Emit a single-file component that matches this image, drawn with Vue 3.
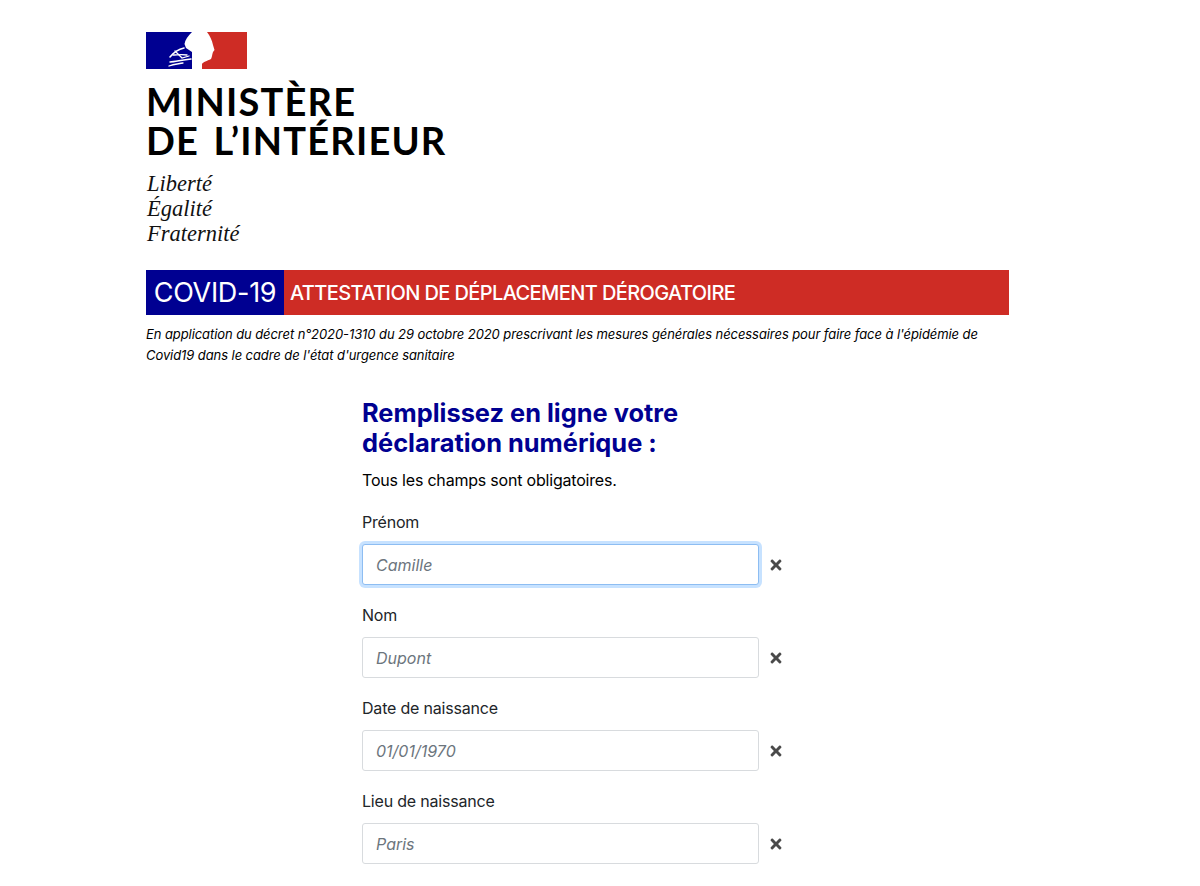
<script setup>
const fields = [
  { label: 'Prénom', placeholder: 'Camille', focus: true },
  { label: 'Nom', placeholder: 'Dupont' },
  { label: 'Date de naissance', placeholder: '01/01/1970' },
  { label: 'Lieu de naissance', placeholder: 'Paris' },
]
</script>

<template>
  <div class="page">
    <header class="logo">
      <svg class="flag" viewBox="0 0 101 37" width="101" height="37" aria-hidden="true">
        <rect width="101" height="37" fill="#fff" />
        <path d="M0 0H46C42 4 39 8 38.500 12L40 16 46 20V37H0Z" fill="#000091" />
        <path d="M61 0H101V37H56V32C57 30 61 29 65 27 66 25 66 23 67 20L68.500 18 67 13C66 8 64 4 61 0Z" fill="#ce2c25" />
        <g fill="none" stroke="#fff" stroke-linecap="round">
          <path d="M24 25C28 20 33 17 38 16" stroke-width="1.600" />
          <path d="M27 23C31 23 35 22 41 23" stroke-width="1.300" />
          <path d="M29 19L36 26 43 24" stroke-width="1.300" />
          <path d="M24 30C29 30 35 28 45 27" stroke-width="1.500" />
          <path d="M23 34C28 32 32 32 37 31" stroke-width="1.300" />
        </g>
      </svg>
      <div class="ministry">MINISTÈRE<br />DE L’INTÉRIEUR</div>
      <div class="motto">Liberté<br />Égalité<br />Fraternité</div>
    </header>

    <div class="banner">
      <div class="banner-covid">COVID-19</div>
      <div class="banner-title">ATTESTATION DE DÉPLACEMENT DÉROGATOIRE</div>
    </div>
    <p class="decree">
      En application du décret n°2020-1310 du 29 octobre 2020 prescrivant les mesures générales nécessaires pour faire face à l'épidémie de Covid19 dans le cadre de l'état d'urgence sanitaire
    </p>

    <form class="form">
      <h2 class="form-title">Remplissez en ligne votre<br />déclaration numérique :</h2>
      <p class="form-note">Tous les champs sont obligatoires.</p>
      <div v-for="field in fields" :key="field.label" class="field">
        <label class="field-label">{{ field.label }}</label>
        <div class="field-row">
          <input class="field-input" :class="{ focused: field.focus }" type="text" :placeholder="field.placeholder" />
          <svg class="clear" viewBox="0 0 352 512" width="12" height="16" aria-hidden="true">
            <path d="M242.720 256l100.070-100.070c12.280-12.280 12.280-32.190 0-44.480l-22.240-22.240c-12.280-12.280-32.190-12.280-44.480 0L176 189.280 75.930 89.210c-12.280-12.280-32.190-12.280-44.480 0L9.210 111.450c-12.280 12.280-12.280 32.190 0 44.480L109.280 256 9.210 356.070c-12.280 12.280-12.280 32.190 0 44.480l22.240 22.240c12.280 12.280 32.200 12.280 44.480 0L176 322.720l100.070 100.070c12.280 12.280 32.200 12.280 44.480 0l22.240-22.240c12.280-12.280 12.280-32.190 0-44.480L242.720 256z" fill="#4a4a4a" />
          </svg>
        </div>
      </div>
    </form>
  </div>
</template>

<style>
html, body { margin: 0; background: #fff; }
</style>

<style scoped>
.page {
  box-sizing: border-box;
  width: 1200px;
  height: 886px;
  overflow: hidden;
  padding: 32px 191px 0 146px;
  font-family: Inter, "Liberation Sans", sans-serif;
  color: #212529;
}
.flag { display: block; }
.ministry {
  margin-top: 13px;
  font-family: Lato, "Liberation Sans", sans-serif;
  font-weight: 700;
  font-size: 38px;
  line-height: 39px;
  letter-spacing: 1.2px;
  word-spacing: 4px;
  color: #000;
}
.motto {
  margin-top: 11px;
  padding-left: 1px;
  font-family: "Liberation Serif", serif;
  font-style: italic;
  font-size: 22.500px;
  line-height: 25px;
  color: #111;
}
.banner {
  display: flex;
  height: 45px;
  margin-top: 24px;
  color: #fff;
}
.banner-covid {
  width: 138px;
  background: #000091;
  font-size: 27px;
  line-height: 45px;
  text-align: center;
  letter-spacing: -0.3px;
}
.banner-title {
  flex: 1;
  padding-left: 6px;
  background: #ce2c25;
  font-size: 20px;
  font-weight: 500;
  line-height: 46px;
  letter-spacing: -0.6px;
}
.decree {
  margin: 9px 0 0;
  font-size: 13px;
  font-style: italic;
  line-height: 21px;
  letter-spacing: -0.08px;
  color: #000;
}
.form {
  width: 430px;
  margin: 32px 0 0 216px;
}
.form-title {
  margin: 0;
  font-size: 25.400px;
  font-weight: 700;
  line-height: 30px;
  color: #000091;
}
.form-note {
  margin: 10px 0 0;
  font-size: 16px;
  line-height: 24px;
  letter-spacing: -0.2px;
  color: #000;
}
.field { margin-top: 18px; }
.field-label {
  display: block;
  margin-bottom: 10px;
  font-size: 16px;
  line-height: 24px;
  letter-spacing: -0.2px;
}
.field-row {
  display: flex;
  align-items: center;
  gap: 11px;
}
.field-input {
  box-sizing: border-box;
  width: 397px;
  height: 41px;
  padding: 0 13px;
  border: 1px solid #d8dbde;
  border-radius: 3px;
  outline: none;
  background: #fff;
  font-family: inherit;
  font-size: 16px;
}
.field-input::placeholder {
  color: #6c757d;
  font-style: italic;
  opacity: 1;
}
.field-input.focused {
  border-color: #8dbdf2;
  box-shadow: 0 0 0 3px rgba(0, 123, 255, .22);
}
</style>
